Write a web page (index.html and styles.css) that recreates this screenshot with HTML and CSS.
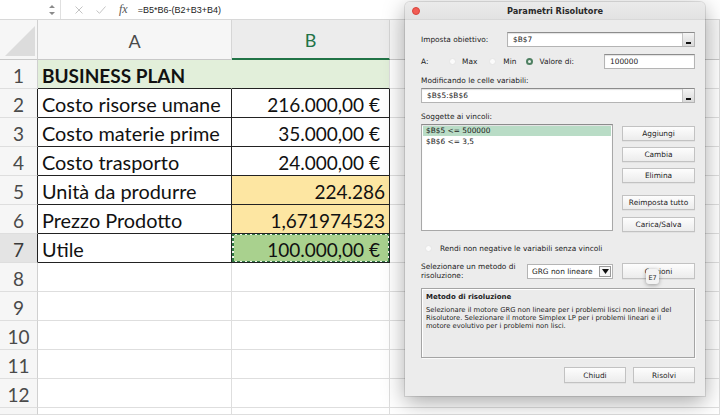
FILE: index.html
```html
<!DOCTYPE html>
<html lang="it">
<head>
<meta charset="utf-8">
<title>Parametri Risolutore</title>
<link rel="stylesheet" href="styles.css">
</head>
<body>
<div class="fbar">
  <div class="namebox">
    <svg class="stepper" width="6" height="12" viewBox="0 0 6 12"><path d="M0 4 L3 1 L6 4 Z M0 8 L3 11 L6 8 Z" fill="#8a8a8a"/></svg>
  </div>
  <svg class="ico-x" width="8" height="8" viewBox="0 0 8 8"><path d="M0.5 0.5 L7.5 7.5 M7.5 0.5 L0.5 7.5" stroke="#c4c4c4" stroke-width="1" fill="none"/></svg>
  <svg class="ico-ok" width="10" height="8" viewBox="0 0 10 8"><path d="M0.5 4.5 L3.5 7.3 L9.5 0.5" stroke="#c4c4c4" stroke-width="1" fill="none"/></svg>
  <span class="fx">fx</span>
  <span class="formula">=B5*B6-(B2+B3+B4)</span>
</div>

<div class="grid">
  <div class="corner"><svg width="32" height="32" viewBox="0 0 32 32"><path d="M31 1 L31 31 L1 31 Z" fill="#dcdcdc"/></svg></div>
  <div class="ch">A</div>
  <div class="ch ch-sel">B</div>
  <div class="ch ch-c"></div>

  <div class="rh">1</div>
  <div class="c g1 g1a kb title">BUSINESS PLAN</div>
  <div class="c g1 kb"></div>
  <div class="c"></div>

  <div class="rh kr">2</div>
  <div class="c kr kb ta">Costo risorse umane</div>
  <div class="c kr kb num eur">216.000,00 €</div>
  <div class="c"></div>

  <div class="rh kr">3</div>
  <div class="c kr kb ta">Costo materie prime</div>
  <div class="c kr kb num eur">35.000,00 €</div>
  <div class="c"></div>

  <div class="rh kr">4</div>
  <div class="c kr kb ta">Costo trasporto</div>
  <div class="c kr kb num eur">24.000,00 €</div>
  <div class="c"></div>

  <div class="rh kr">5</div>
  <div class="c kr kb ta">Unità da produrre</div>
  <div class="c kr kb num yel">224.286</div>
  <div class="c"></div>

  <div class="rh kr">6</div>
  <div class="c kr kb ta">Prezzo Prodotto</div>
  <div class="c kr kb num yel">1,671974523</div>
  <div class="c"></div>

  <div class="rh kr rh-sel">7</div>
  <div class="c kr kb ta">Utile</div>
  <div class="c kr kb num eur grn ants">100.000,00 €</div>
  <div class="c"></div>

  <div class="rh">8</div><div class="c"></div><div class="c"></div><div class="c"></div>
  <div class="rh">9</div><div class="c"></div><div class="c"></div><div class="c"></div>
  <div class="rh">10</div><div class="c"></div><div class="c"></div><div class="c"></div>
  <div class="rh">11</div><div class="c"></div><div class="c"></div><div class="c"></div>
  <div class="rh">12</div><div class="c"></div><div class="c"></div><div class="c"></div>
  <div class="rh"></div><div class="c"></div><div class="c"></div><div class="c"></div>
</div>

<div class="dlg">
  <div class="tb">
    <span class="close"></span>
    <span class="ttl">Parametri Risolutore</span>
    <span></span>
  </div>
  <div class="body">
    <div class="row r-obj">
      <span class="lab-obj">Imposta obiettivo:</span>
      <div class="field grow"><span class="ftxt">$B$7</span><span class="collapse"></span></div>
    </div>
    <div class="row r-a">
      <span class="lab-a">A:</span>
      <span class="radio r1"></span><span class="rt">Max</span>
      <span class="radio r2"></span><span class="rt">Min</span>
      <span class="radio on"></span><span class="rt">Valore di:</span>
      <div class="field val"><span class="ftxt">100000</span></div>
    </div>
    <div class="lbl l-mod">Modificando le celle variabili:</div>
    <div class="field full"><span class="ftxt">$B$5:$B$6</span><span class="collapse"></span></div>
    <div class="lbl l-sog">Soggette ai vincoli:</div>
    <div class="row cons">
      <div class="list">
        <div class="li sel">$B$5 &lt;= 500000</div>
        <div class="li">$B$6 &lt;= 3,5</div>
      </div>
      <div class="btncol">
        <div class="btn b1">Aggiungi</div>
        <div class="btn b2">Cambia</div>
        <div class="btn b3">Elimina</div>
        <div class="btn b4">Reimposta tutto</div>
        <div class="btn b5">Carica/Salva</div>
      </div>
    </div>
    <div class="row chk">
      <span class="radio cb"></span>
      <span>Rendi non negative le variabili senza vincoli</span>
    </div>
    <div class="row meth">
      <div class="mlab">Selezionare un metodo di<br>risoluzione:</div>
      <div class="select"><span class="stxt">GRG non lineare</span><span class="arrow"><svg width="7" height="5" viewBox="0 0 7 5"><path d="M0 0 L7 0 L3.5 5 Z" fill="#111"/></svg></span></div>
      <div class="btn opz">Opzioni<span class="tip">E7</span></div>
    </div>
    <div class="group">
      <div class="gtitle">Metodo di risoluzione</div>
      <div class="gdesc">Selezionare il motore GRG non lineare per i problemi lisci non lineari del<br>Risolutore. Selezionare il motore Simplex LP per i problemi lineari e il<br>motore evolutivo per i problemi non lisci.</div>
    </div>
    <div class="row foot">
      <div class="btn fb">Chiudi</div>
      <div class="btn fb">Risolvi</div>
    </div>
  </div>
</div>
</body>
</html>
```

FILE: styles.css
```css
* { box-sizing: border-box; }
html, body { margin: 0; padding: 0; }
body {
  width: 720px;
  height: 415px;
  overflow: hidden;
  background: #fff;
  font-family: Lato, "Open Sans", sans-serif;
  position: relative;
}

/* formula bar */
.fbar {
  height: 20px;
  display: flex;
  align-items: center;
  border-bottom: 1px solid #d8d8d8;
  background: #fff;
}
.namebox {
  width: 61px;
  height: 100%;
  border-right: 1px solid #e0e0e0;
  display: flex;
  align-items: center;
  justify-content: flex-end;
  padding-right: 5px;
}
.ico-x { margin-left: 14px; }
.ico-ok { margin-left: 13px; }
.fx {
  margin-left: 13px;
  font-family: "Liberation Serif", serif;
  font-style: italic;
  font-size: 12px;
  color: #555;
}
.formula {
  margin-left: 10px;
  font-family: "Liberation Sans", sans-serif;
  font-size: 9px;
  color: #222;
}

/* grid */
.grid {
  display: grid;
  grid-template-columns: 38px 194px 158px 330px;
  grid-template-rows: 40px repeat(12, 29px) 7px;
}
.corner {
  background: #f6f6f6;
  border-right: 1px solid #d0d0d0;
  border-bottom: 1px solid #c8c8c8;
  display: flex;
  align-items: flex-end;
  justify-content: flex-start;
  padding: 0 0 2px 4px;
}
.ch {
  background: #f6f6f6;
  border-right: 1px solid #d6d6d6;
  border-bottom: 1px solid #c8c8c8;
  display: flex;
  align-items: center;
  justify-content: center;
  font-size: 18px;
  color: #4a4a4a;
  padding-top: 2px;
}
.ch-sel {
  color: #217346;
  background: #ececec;
  border-bottom: 2px solid #217346;
}
.rh {
  background: #f6f6f6;
  border-right: 1px solid #d0d0d0;
  border-bottom: 1px solid #dedede;
  display: flex;
  align-items: center;
  justify-content: center;
  font-size: 19px;
  color: #4a4a4a;
  padding-top: 2px;
}
.rh-sel { background: #e4e4e4; color: #3a3a3a; }
.c {
  border-right: 1px solid #dedede;
  border-bottom: 1px solid #dedede;
  display: flex;
  align-items: center;
  font-size: 19px;
  color: #111;
  padding: 2px 4px 0 4px;
  white-space: nowrap;
  overflow: hidden;
  position: relative;
}
.ta { font-size: 19.9px; }
.kr { border-right-color: #222; }
.kb { border-bottom-color: #222; }
.g1 { background: #e2efda; }
.g1a { border-right-color: #e2efda; }
.title { font-weight: bold; }
.num { justify-content: flex-end; }
.eur { padding-right: 9px; }
.yel { background: #fde6a2; }
.grn { background: #a9d18e; }
.ants::after {
  content: "";
  position: absolute;
  left: 0; top: -1px; right: -1px; bottom: -1px;
  background:
    repeating-linear-gradient(90deg, #1d6a36 0 3px, #ffffff 3px 5px) top / 100% 2px no-repeat,
    repeating-linear-gradient(90deg, #1d6a36 0 3px, #ffffff 3px 5px) bottom / 100% 2px no-repeat,
    repeating-linear-gradient(180deg, #1d6a36 0 3px, #ffffff 3px 5px) left / 2px 100% no-repeat,
    repeating-linear-gradient(180deg, #1d6a36 0 3px, #ffffff 3px 5px) right / 2px 100% no-repeat;
  opacity: 0.85;
}

/* dialog */
.dlg {
  position: absolute;
  left: 405px;
  top: 2px;
  width: 300px;
  height: 394px;
  background: #ececec;
  border-radius: 5px 5px 0 0;
  box-shadow: 0 0 0 1px rgba(0,0,0,0.10), 0 6px 22px rgba(0,0,0,0.35);
  font-family: "DejaVu Sans", sans-serif;
  font-size: 7.4px;
  color: #1c1c1c;
}
.tb {
  height: 18px;
  display: grid;
  grid-template-columns: 1fr auto 1fr;
  align-items: center;
  background: linear-gradient(#ebebeb, #e2e2e2);
  border-radius: 5px 5px 0 0;
  border-bottom: 1px solid #d8d8d8;
}
.close {
  width: 8px;
  height: 8px;
  border-radius: 50%;
  background: #f25c54;
  border: 1px solid #d8443c;
  margin-left: 7px;
}
.ttl {
  font-weight: bold;
  font-size: 8.2px;
  color: #2a2a2a;
}
.body {
  padding: 0 10px 0 16px;
  display: flex;
  flex-direction: column;
}
.row { display: flex; align-items: center; }
.r-obj { margin-top: 12px; height: 15px; }
.lab-obj { width: 86px; }
.field {
  height: 15px;
  background: #fff;
  border: 1px solid #b4b4b4;
  border-top-color: #8c8c8c;
  box-shadow: inset 0 1px 1px rgba(0,0,0,0.12);
  display: flex;
  align-items: center;
  position: relative;
  padding-left: 5px;
}
.grow { flex: 1; }
.ftxt { flex: 1; }
.collapse {
  width: 12px;
  height: 13px;
  background: linear-gradient(#f4f4f4, #d9d9d9);
  border-left: 1px solid #c4c4c4;
  display: flex;
  align-items: flex-end;
  justify-content: center;
  padding-bottom: 2px;
}
.collapse::before {
  content: "";
  width: 5px;
  height: 2px;
  background: #111;
}
.r-a { margin-top: 7px; height: 15px; }
.lab-a { width: 28px; }
.radio {
  width: 7px;
  height: 7px;
  border-radius: 50%;
  background: #fbfbfb;
  border: 1px solid #e6e6e6;
  flex: none;
}
.r1 { margin-right: 6px; }
.r2 { margin-left: 12px; margin-right: 7px; }
.on {
  margin-left: 10px;
  margin-right: 6px;
  background: #e8f0ea;
  border: 2px solid #4f8062;
}
.val { width: 91px; margin-left: auto; }
.lbl { height: 14px; display: flex; align-items: center; }
.l-mod { margin-top: 4px; }
.full { margin-top: 1px; }
.l-sog { margin-top: 6px; }
.cons { align-items: flex-start; margin-top: 1px; }
.list {
  width: 192px;
  height: 107px;
  background: #fff;
  border: 1px solid #a8a8a8;
  border-top-color: #8c8c8c;
  box-shadow: inset 0 1px 1px rgba(0,0,0,0.12);
  padding: 1px 1px;
}
.li { height: 10px; line-height: 10px; padding-left: 3px; }
.li.sel { background: #b9dcc6; }
.li + .li { margin-top: 1px; }
.btncol {
  margin-left: 9px;
  width: 73px;
  display: flex;
  flex-direction: column;
}
.btn {
  height: 15px;
  background: linear-gradient(#fdfdfd, #ececec);
  border: 1px solid #c2c2c2;
  box-shadow: 0 0.5px 0 rgba(0,0,0,0.08);
  display: flex;
  align-items: center;
  justify-content: center;
  position: relative;
}
.b1 { margin-top: 2px; }
.b2, .b3 { margin-top: 6px; }
.b4 { margin-top: 12px; }
.b5 { margin-top: 7px; }
.chk { margin-top: 9px; height: 14px; }
.cb { margin-left: 4px; margin-right: 8px; }
.meth { margin-top: 5px; height: 22px; }
.mlab { width: 106px; line-height: 9px; }
.select {
  width: 86px;
  height: 15px;
  background: #fff;
  border: 1px solid #b4b4b4;
  display: flex;
  align-items: center;
  padding-left: 4px;
}
.stxt { flex: 1; }
.arrow {
  width: 12px;
  height: 11px;
  border: 1px solid #9a9a9a;
  margin-right: 1px;
  display: flex;
  align-items: center;
  justify-content: center;
  background: #f6f6f6;
}
.opz { margin-left: 9px; flex: 1; height: 16px; }
.tip {
  position: absolute;
  left: 23px;
  top: 5px;
  width: 13px;
  height: 15px;
  background: #f3f3f3;
  border-radius: 3px;
  box-shadow: 0 1px 4px rgba(0,0,0,0.35);
  font-size: 6.5px;
  display: flex;
  align-items: center;
  justify-content: center;
  padding-top: 2px;
}
.group {
  margin-top: 6px;
  height: 70px;
  border: 1px solid #a4a4a4;
  box-shadow: inset 1px 1px 0 #fff, 1px 1px 0 #fafafa;
  background: #ebebeb;
  padding: 4px 4px 0 4px;
}
.gtitle { font-weight: bold; font-size: 7px; height: 9px; line-height: 9px; }
.gdesc { margin-top: 4px; font-size: 6.8px; line-height: 8px; white-space: nowrap; }
.foot { margin-top: 9px; justify-content: flex-end; }
.fb { width: 62px; height: 16px; }
.fb + .fb { margin-left: 7px; }
```
